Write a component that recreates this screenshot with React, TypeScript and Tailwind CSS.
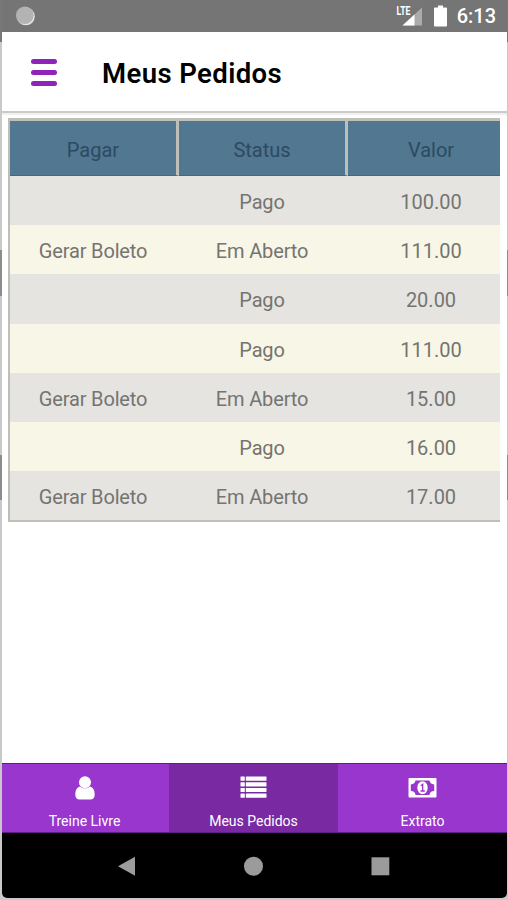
const orders = [
  { status: "Pago", value: "100.00" },
  { pay: "Gerar Boleto", status: "Em Aberto", value: "111.00" },
  { status: "Pago", value: "20.00" },
  { status: "Pago", value: "111.00" },
  { pay: "Gerar Boleto", status: "Em Aberto", value: "15.00" },
  { status: "Pago", value: "16.00" },
  { pay: "Gerar Boleto", status: "Em Aberto", value: "17.00" },
];

const tabs = [
  { label: "Treine Livre", icon: "user" as const, active: false },
  { label: "Meus Pedidos", icon: "list" as const, active: true },
  { label: "Extrato", icon: "money" as const, active: false },
];

const columns = "grid grid-cols-[169px_169px_1fr]";

function TabIcon({ type }: { type: "user" | "list" | "money" }) {
  if (type === "user") {
    return (
      <svg className="w-5 h-[24px]" viewBox="0 0 20 24" fill="white">
        <circle cx="10" cy="6.2" r="6" />
        <path d="M5 10.400C1.900 11.100.3 14.300.3 18.400.3 21.600 1.900 23.500 4.500 23.500h11c2.600 0 4.200-1.900 4.200-5.100 0-4.100-1.600-7.300-4.700-8-2.800 2.500-7.200 2.500-10 0z" />
      </svg>
    );
  }
  if (type === "list") {
    return (
      <svg className="w-[27px] h-[24px]" viewBox="0 0 27 24" fill="white">
        {[0.5, 6.2, 11.9, 17.6].map((y) => (
          <g key={y}>
            <rect x="0.5" y={y} width="4.3" height="4.2" rx="0.5" />
            <rect x="5.8" y={y} width="20.7" height="4.2" rx="0.5" />
          </g>
        ))}
      </svg>
    );
  }
  return (
    <svg className="w-[29px] h-[24px]" viewBox="0 0 29 24">
      <rect x="0.5" y="2" width="28" height="19.500" rx="0.800" fill="white" />
      <path d="M7.500 4.500h14c.300 2.300 1.800 3.900 4.700 3.900v6.700c-2.900 0-4.400 1.600-4.700 3.900h-14c-.300-2.300-1.800-3.900-4.700-3.900V8.400c2.900 0 4.400-1.600 4.700-3.900z" fill="#9836cd" />
      <ellipse cx="14.500" cy="11.700" rx="5.200" ry="6.500" fill="white" />
      <path d="M12.800 9.800l1.900-1.500v6.500M12.500 15h4.300" fill="none" stroke="#9836cd" strokeWidth="1.300" />
    </svg>
  );
}

function StatusBar() {
  return (
    <div className="flex h-8 items-center bg-[#757575] pl-[13px] pr-[11px] text-white">
      <svg className="h-5 w-5" viewBox="0 0 20 20">
        <circle cx="10.800" cy="10.300" r="9" fill="#e5e5e5" />
        <circle cx="9.800" cy="9.300" r="8.800" fill="#b3b3b3" />
      </svg>
      <div className="flex-1" />
      <svg className="h-6 w-[27px]" viewBox="0 0 27 24">
        <path d="M26 3.500v18H6.500z" fill="#ababab" />
        <path d="M18.500 10.500V21.500H6.500z" fill="white" />
        <text
          x="0.500"
          y="10.500"
          fontSize="12"
          fontWeight="700"
          fontFamily="Roboto, sans-serif"
          textLength="14"
          lengthAdjust="spacingAndGlyphs"
          fill="white"
          stroke="#757575"
          strokeWidth="1"
          paintOrder="stroke"
        >
          LTE
        </text>
      </svg>
      <svg className="ml-[11px] h-[22px] w-[13px]" viewBox="0 0 13 22" fill="white">
        <path d="M4 0.500h5v2h3q1 0 1 1v17q0 1-1 1H1q-1 0-1-1v-17q0-1 1-1h3z" />
      </svg>
      <span className="ml-[10px] text-[20px] leading-6 font-medium">6:13</span>
    </div>
  );
}

function OrdersTable() {
  return (
    <div className="ml-[6px] mr-[7px] border-t-[3px] border-b-2 border-l-2 border-[#bdbfb8] text-center text-[20px] text-[#747471]">
      <div className={`${columns} h-[55px] text-[#2c4a63]`}>
        <div className="flex items-center justify-center border-r-[3px] border-b border-[#bdbfb8] border-b-[#47657c] bg-[#527791] pt-1">
          Pagar
        </div>
        <div className="flex items-center justify-center border-r-[3px] border-b border-[#bdbfb8] border-b-[#47657c] bg-[#527791] pt-1">
          Status
        </div>
        <div className="flex items-center justify-center border-b border-b-[#47657c] bg-[#527791] pt-1 pl-[14px]">
          Valor
        </div>
      </div>
      {orders.map((order, i) => (
        <div
          key={i}
          className={`${columns} h-[49.200px] items-center pt-[3px] odd:bg-[#f8f6e6] even:bg-[#e5e4e1]`}
        >
          <div className="pr-[3px] tracking-[-0.15px]">{order.pay}</div>
          <div className="pr-[3px] tracking-[-0.15px]">{order.status}</div>
          <div className="pl-[14px]">{order.value}</div>
        </div>
      ))}
    </div>
  );
}

export default function App() {
  return (
    <div className="relative h-[900px] w-[508px] bg-[#c9c9c9] pr-px pb-[2px] pl-[2px] font-['Roboto',sans-serif]">
      {/* Side buttons of the phone body */}
      <div className="absolute top-0 left-0 h-[42px] w-[2px] bg-[#77777c]" />
      <div className="absolute top-[250px] left-0 h-[46px] w-[2px] bg-[#8c8c8c]" />
      <div className="absolute top-[455px] left-0 h-[45px] w-[2px] bg-[#8c8c8c]" />
      <div className="absolute top-0 right-0 h-[42px] w-px bg-[#77777c]" />
      <div className="absolute top-[250px] right-0 h-[46px] w-px bg-[#8c8c8c]" />
      <div className="absolute top-[455px] right-0 h-[45px] w-px bg-[#8c8c8c]" />

      <div className="flex h-full flex-col overflow-hidden rounded-b-[5px] bg-white">
        <StatusBar />

        <header className="flex h-[81px] items-center border-b-2 border-[#cbcbcb] pt-px pl-[29px]">
          <div className="flex w-[26px] flex-col gap-[6px]">
            <span className="h-[5px] rounded-full bg-[#8e24b8]" />
            <span className="h-[5px] rounded-full bg-[#8e24b8]" />
            <span className="h-[5px] rounded-full bg-[#8e24b8]" />
          </div>
          <h1 className="ml-[43px] pt-[3px] pl-[2px] text-[27.500px] leading-8 font-semibold tracking-[0.4px] text-black">
            Meus Pedidos
          </h1>
        </header>

        <main className="flex-1 border-t-2 border-[#f0f0f0] pt-[3px]">
          <OrdersTable />
        </main>

        <nav className="grid h-[70px] grid-cols-[167px_169px_169px] border-t border-b border-[#5f1d85] text-white">
          {tabs.map((tab) => (
            <div
              key={tab.label}
              className={`flex flex-col items-center pt-[12px] ${tab.active ? "bg-[#7929a2]" : "bg-[#9836cd] first:pr-[2px]"}`}
            >
              <TabIcon type={tab.icon} />
              <span className="mt-[12px] text-[14px] leading-[18px]">{tab.label}</span>
            </div>
          ))}
        </nav>

        {/* Android navigation keys */}
        <div className="flex h-[65px] items-center bg-black pl-[116px]">
          <svg className="h-5 w-[272px]" viewBox="0 0 272 20" fill="#9b9b9b">
            <path d="M0 10.300L17 0.800v19z" />
            <circle cx="135.500" cy="10.300" r="9.500" />
            <rect x="253.500" y="1.300" width="17.800" height="18" />
          </svg>
        </div>
      </div>
    </div>
  );
}
